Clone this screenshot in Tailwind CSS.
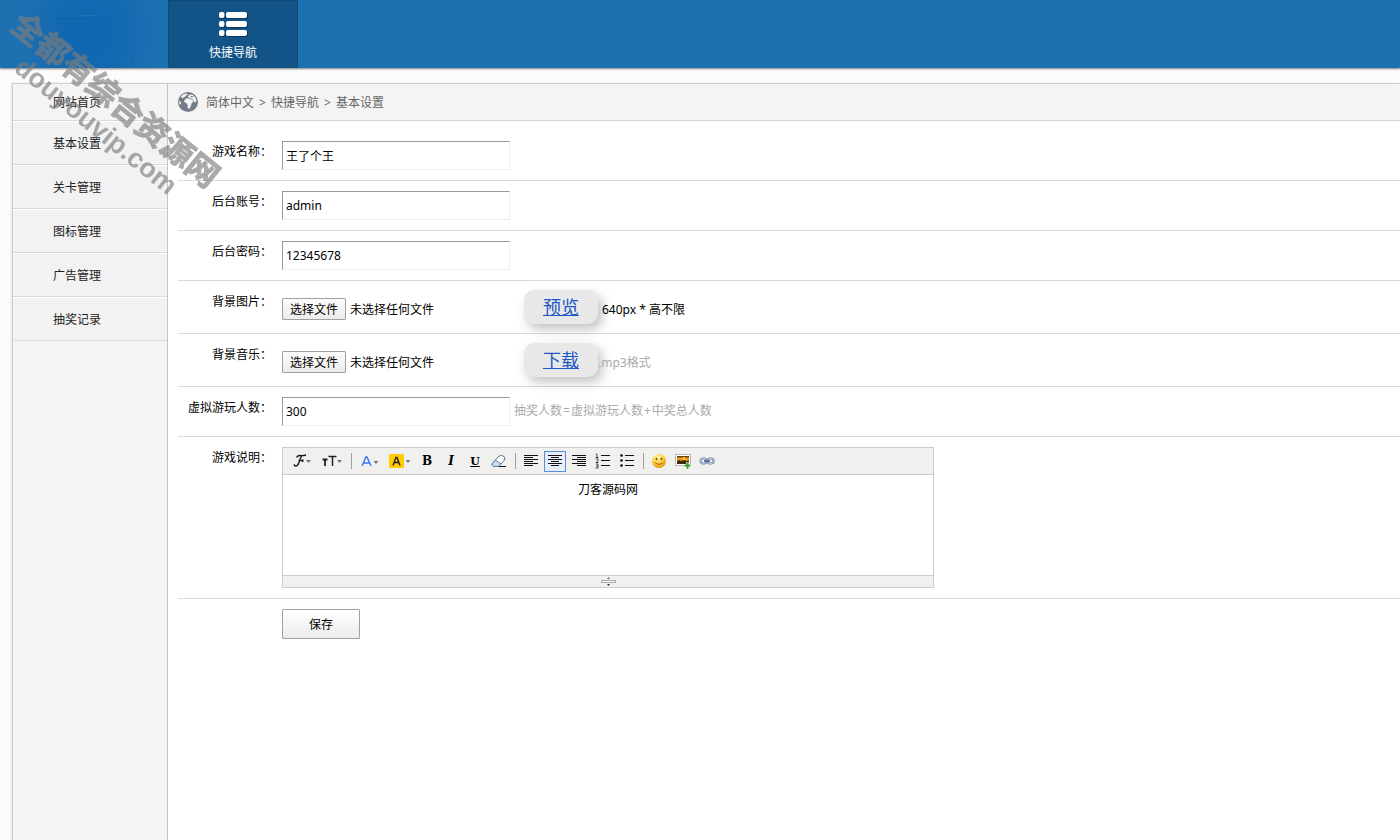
<!DOCTYPE html>
<html lang="zh-CN">
<head>
<meta charset="utf-8">
<title>基本设置</title>
<script src="https://cdn.jsdelivr.net/npm/@tailwindcss/browser@4"></script>
</head>
<body class="relative flex h-screen flex-col overflow-hidden bg-[#fcfcfc] font-['Noto_Sans','Noto_Sans_CJK_SC',sans-serif] text-xs text-black">

<header class="relative z-10 flex h-[68px] shrink-0 bg-[#1e71b1] shadow-[0_1px_2px_#00000080]">
  <div class="w-[168px] bg-[radial-gradient(ellipse_70px_80px_at_90px_34px,#0f67b2_0%,#1269b1_45%,transparent_100%)]">
    <svg class="h-[68px] w-[168px]" viewBox="0 0 168 68" fill="none"><path d="M56 18.500q20 1 43-1" stroke="#0d5a9c" stroke-opacity=".6"/><path d="M78 15.500h20" stroke="#2a7fc0" stroke-opacity=".5"/><path d="m131 59 2-2" stroke="#0d5a9c"/></svg>
  </div>
  <button type="button" class="flex w-[130px] flex-col items-center border border-b-0 border-[#0f4a78] bg-[#125488] pt-[11px] text-white">
    <svg class="h-6 w-7 drop-shadow-[1px_1px_0_#0a3558]" viewBox="0 0 28 24" fill="#fff"><rect x="0" y="0" width="5.500" height="6" rx="2"/><rect x="7" y="0" width="21" height="6" rx="2"/><rect x="0" y="9" width="5.500" height="6" rx="2"/><rect x="7" y="9" width="21" height="6" rx="2"/><rect x="0" y="18" width="5.500" height="6" rx="2"/><rect x="7" y="18" width="21" height="6" rx="2"/></svg>
    <span class="mt-2 leading-[18px]">快捷导航</span>
  </button>
</header>

<div class="mt-[15px] ml-3 flex min-h-0 grow border-t border-l border-[#cfcfcf] bg-white shadow-[-1px_0_2px_#0000001a]">
  <nav class="w-[155px] shrink-0 border-r border-[#c4c4c4] bg-[#f4f4f4] text-[#222]">
    <a href="#" class="flex h-[37px] items-center border-b border-[#dadada] pt-[2px] pl-10">网站首页</a>
    <a href="#" class="flex h-11 items-center border-t border-b border-t-white border-b-[#dadada] bg-[#f2f2f2] pt-[2px] pl-10">基本设置</a>
    <a href="#" class="flex h-11 items-center border-t border-b border-t-white border-b-[#dadada] bg-[#f2f2f2] pt-[2px] pl-10">关卡管理</a>
    <a href="#" class="flex h-11 items-center border-t border-b border-t-white border-b-[#dadada] bg-[#f2f2f2] pt-[2px] pl-10">图标管理</a>
    <a href="#" class="flex h-11 items-center border-t border-b border-t-white border-b-[#dadada] bg-[#f2f2f2] pt-[2px] pl-10">广告管理</a>
    <a href="#" class="flex h-11 items-center border-t border-b border-t-white border-b-[#dadada] bg-[#f2f2f2] pt-[2px] pl-10">抽奖记录</a>
  </nav>

  <main class="min-w-0 grow">
    <div class="flex h-[37px] items-center border-b border-[#d3d3d3] bg-[#f4f4f4] pl-[10px] leading-5 text-[#666]">
      <svg class="mr-2 h-5 w-5" viewBox="0 0 20 20"><circle cx="10" cy="10" r="10" fill="#757b88"/><path fill="#f4f4f4" d="M3 4.500 5 2.600 8 1.400l2 .8-1.600 1-1 1.200-1.500.5L5 6.200 3.800 6zM7 7.600l1.800-1.400 2.400.3 1.200 1 1.600-.2.800 1.200.2 1.600-1.200 1-.6 2-1.200 2.800-1.400 1.200-1-1.800v-2.600L8.400 11 6.800 10.400 6 9zM9.800 4.200l2.200-1.800 2.800.4 2.800 3 .8 2.700-.9 2-1.500-.6L15 7.600l-1.400-1-2-.4zM1.200 9l1.200.6.800 2-.8 1.200-1.200-1.600z"/><path fill="#757b88" d="m12 4.500 2-.7 1.500 1.200-1.500.5z"/></svg>
      <span class="pt-[2px]">简体中文</span><span class="w-[17px] pt-[2px] text-center">&gt;</span><span class="pt-[2px]">快捷导航</span><span class="w-[17px] pt-[2px] text-center">&gt;</span><span class="pt-[2px]">基本设置</span>
    </div>

    <form class="ml-[10px] pt-[10px]">
      <div class="flex border-b border-[#dadada] py-[10px]">
        <label for="f1" class="mr-[10px] w-[94px] text-right leading-[22px]">游戏名称：</label>
        <input id="f1" type="text" value="王了个王" class="h-[29px] w-[228px] border border-t-[#999] border-r-[#eee] border-b-[#eee] border-l-[#999] px-[3px] outline-none">
      </div>
      <div class="flex border-b border-[#dadada] py-[10px]">
        <label for="f2" class="mr-[10px] w-[94px] text-right leading-[22px]">后台账号：</label>
        <input id="f2" type="text" value="admin" class="h-[29px] w-[228px] border border-t-[#999] border-r-[#eee] border-b-[#eee] border-l-[#999] px-[3px] outline-none">
      </div>
      <div class="flex border-b border-[#dadada] py-[10px]">
        <label for="f3" class="mr-[10px] w-[94px] text-right leading-[22px]">后台密码：</label>
        <input id="f3" type="text" value="12345678" class="h-[29px] w-[228px] border border-t-[#999] border-r-[#eee] border-b-[#eee] border-l-[#999] px-[3px] outline-none">
      </div>
      <div class="flex border-b border-[#dadada] py-[9px]">
        <span class="mr-[10px] w-[94px] text-right leading-6">背景图片：</span>
        <div class="relative mt-2 mr-1 flex w-[238px] gap-1 leading-6">
          <input id="f4" type="file" class="sr-only" aria-label="背景图片">
          <label for="f4" class="flex h-[22px] w-16 items-center justify-center rounded-[1px] border border-[#a0a0a0] bg-linear-to-b from-[#fcfcfc] to-[#ececec] pt-[2px]">选择文件</label>
          <span class="h-[22px]">未选择任何文件</span>
        </div>
        <a href="#" class="mr-1 flex h-[34px] w-[74px] items-center justify-center rounded-[10px] bg-[#e8e8e8] text-lg text-[#2057c7] underline shadow-[4px_5px_12px_#00000040]">预览</a>
        <span class="mt-2 h-[22px] leading-6">640px * 高不限</span>
      </div>
      <div class="flex border-b border-[#dadada] py-[9px]">
        <span class="mr-[10px] w-[94px] text-right leading-6">背景音乐：</span>
        <div class="relative mt-2 mr-1 flex w-[238px] gap-1 leading-6">
          <input id="f5" type="file" class="sr-only" aria-label="背景音乐">
          <label for="f5" class="flex h-[22px] w-16 items-center justify-center rounded-[1px] border border-[#a0a0a0] bg-linear-to-b from-[#fcfcfc] to-[#ececec] pt-[2px]">选择文件</label>
          <span class="h-[22px]">未选择任何文件</span>
        </div>
        <a href="#" class="flex h-[34px] w-[74px] items-center justify-center rounded-[10px] bg-[#e8e8e8] text-lg text-[#2057c7] underline shadow-[4px_5px_12px_#00000040]">下载</a>
        <span class="mt-2 h-[22px] leading-6 text-[#aaa]">.mp3格式</span>
      </div>
      <div class="flex border-b border-[#dadada] py-[10px]">
        <label for="f6" class="mr-[10px] w-[94px] text-right leading-[22px]">虚拟游玩人数：</label>
        <input id="f6" type="text" value="300" class="mr-1 h-[29px] w-[228px] border border-t-[#999] border-r-[#eee] border-b-[#eee] border-l-[#999] px-[3px] outline-none">
        <span class="leading-7 text-[#aaa]">抽奖人数<span class="px-px">=</span>虚拟游玩人数<span class="px-px">+</span>中奖总人数</span>
      </div>
      <div class="flex border-b border-[#dadada] py-[10px]">
        <span class="mr-[10px] w-[94px] text-right leading-[22px]">游戏说明：</span>
        <div class="w-[652px] border border-[#ccc]">
          <div role="toolbar" class="flex h-[27px] items-center gap-[2px] border-b border-[#ccc] bg-[#f0f0ee] pl-[5px]">
            <button type="button" aria-label="字体" class="flex h-[21px] w-7 items-center justify-center"><svg class="h-4 w-5" viewBox="0 0 20 16"><path d="M4.500 4.500Q5.500 2.500 8 2.500q3 .5 6-.5M9.500 3Q8 6 7 9.500 5.800 13 3.500 13 1.800 12.800 2.500 11.300M6.500 7.500h5M11 6.300 10.500 9" fill="none" stroke="#1c1c1c" stroke-width="1.400"/><path d="M14 7h5l-2.500 3z" fill="#777"/></svg></button>
            <button type="button" aria-label="文字大小" class="flex h-[21px] w-7 items-center justify-center"><svg class="h-4 w-5" viewBox="0 0 20 16" fill="none" stroke="#222"><path d="M.500 6.500h5M3 6.500V13" stroke-width="1.800"/><path d="M6.500 3.500h8M10.500 3v10" stroke-width="1.500"/><path d="M15 7h5l-2.500 3z" fill="#777" stroke="none"/></svg></button>
            <span class="flex h-4 w-[6px] justify-center"><i class="w-px bg-[#a0a0a0]"></i></span>
            <button type="button" aria-label="文字颜色" class="flex h-[21px] w-7 items-center justify-center"><svg class="h-4 w-[18px]" viewBox="0 0 18 16"><path d="m1 13 4-9h1l4 9M2.500 10h6" fill="none" stroke="#3476f5" stroke-width="1.400"/><path d="M12.500 8h5L15 11z" fill="#777"/></svg></button>
            <button type="button" aria-label="文字背景" class="flex h-[21px] w-7 items-center justify-center"><svg class="h-4 w-[22px]" viewBox="0 0 22 16"><rect y="1" width="15" height="14" rx="1.500" fill="#fc0"/><path d="m4 12.500 3-8h1l3 8M5 9.500h5" fill="none" stroke="#222" stroke-width="1.400"/><path d="M16.500 7h5L19 10z" fill="#777"/></svg></button>
            <button type="button" aria-label="粗体" class="h-[21px] w-[22px] font-['DejaVu_Serif',serif] text-xs leading-[21px] font-bold">B</button>
            <button type="button" aria-label="斜体" class="h-[21px] w-[22px] font-['DejaVu_Serif',serif] text-xs leading-[21px] font-bold italic">I</button>
            <button type="button" aria-label="下划线" class="h-[21px] w-[22px] font-['DejaVu_Serif',serif] text-[11px] leading-[19px] font-bold underline underline-offset-1">U</button>
            <button type="button" aria-label="删除格式" class="flex h-[21px] w-[22px] items-center justify-center"><svg class="h-4 w-4" viewBox="0 0 16 16"><path d="M7 13.500h8" stroke="#111"/><path d="M1 11 7 4Q8.500 2.500 10.500 2.500L13 3.500Q14.500 5 13.500 7L8.500 12.500Q7.500 13.500 6 13.500H3Q1 13 1 11z" fill="#fff" stroke="#5b7396"/><path d="M4.500 7.200 10 10.800 8 13Q7 13.500 6 13.500H3Q1 13 1 11z" fill="#c9daf3" stroke="#5b7396" stroke-width=".8"/></svg></button>
            <span class="flex h-4 w-[6px] justify-center"><i class="w-px bg-[#a0a0a0]"></i></span>
            <button type="button" aria-label="左对齐" class="flex h-[21px] w-[22px] items-center justify-center"><svg class="h-4 w-4" viewBox="0 0 16 16" shape-rendering="crispEdges"><path d="M1 2.500h14M1 4.500h9M1 6.500h14M1 8.500h9M1 10.500h14M1 12.500h9" stroke="#111"/></svg></button>
            <button type="button" aria-label="居中" aria-pressed="true" class="flex h-[21px] w-[22px] items-center justify-center border border-[#5690d2] bg-[#e9effa]"><svg class="h-4 w-4 shrink-0" viewBox="0 0 16 16" shape-rendering="crispEdges"><path d="M1 2.500h14M4 4.500h8M1 6.500h14M4 8.500h8M1 10.500h14M4 12.500h8" stroke="#111"/></svg></button>
            <button type="button" aria-label="右对齐" class="flex h-[21px] w-[22px] items-center justify-center"><svg class="h-4 w-4" viewBox="0 0 16 16" shape-rendering="crispEdges"><path d="M1 2.500h14M6 4.500h9M1 6.500h14M6 8.500h9M1 10.500h14M6 12.500h9" stroke="#111"/></svg></button>
            <button type="button" aria-label="编号" class="flex h-[21px] w-[22px] items-center justify-center"><svg class="h-4 w-4" viewBox="0 0 16 16"><path d="M6 2.500h9M6 7.500h9M6 12.500h9" stroke="#111"/><path d="M1 1h1v3M.500 4.500h3M1 6h2v1.500L1 9.500h2.500M1 11h2v4H.500M1 13h2" fill="none" stroke="#333" stroke-width=".9"/></svg></button>
            <button type="button" aria-label="项目符号" class="flex h-[21px] w-[22px] items-center justify-center"><svg class="h-4 w-4" viewBox="0 0 16 16"><path d="M6 2.500h9M6 7.500h9M6 12.500h9" stroke="#111"/><circle cx="2.500" cy="2.500" r="1.300"/><circle cx="2.500" cy="7.500" r="1.300"/><circle cx="2.500" cy="12.500" r="1.300"/></svg></button>
            <span class="flex h-4 w-[6px] justify-center"><i class="w-px bg-[#a0a0a0]"></i></span>
            <button type="button" aria-label="插入表情" class="flex h-[21px] w-[22px] items-center justify-center"><svg class="h-4 w-4" viewBox="0 0 16 16"><defs><radialGradient id="sm" cx=".4" cy=".25" r=".8"><stop stop-color="#fff7b0"/><stop offset=".55" stop-color="#fdcf3a"/><stop offset="1" stop-color="#e08a10"/></radialGradient></defs><circle cx="8" cy="8" r="7" fill="url(#sm)"/><ellipse cx="5.500" cy="6" rx=".9" ry="1.300" fill="#7a4a08"/><ellipse cx="10.500" cy="6" rx=".9" ry="1.300" fill="#7a4a08"/><path d="M3.800 9.200Q8 13.500 12.200 9.200" fill="none" stroke="#a8660c" stroke-width="1"/></svg></button>
            <button type="button" aria-label="图片" class="flex h-[21px] w-[22px] items-center justify-center"><svg class="h-4 w-4" viewBox="0 0 16 16"><rect x=".5" y="1.500" width="15" height="11" fill="#fff" stroke="#b8b8b8"/><path d="M2 3h12v8H2z" fill="#e79b17"/><path d="M2 3h12v1.500H2z" fill="#6b4206"/><path d="M2 11V8l2-1 2 1 3-1 2 1 3-.5V11z" fill="#3d2808"/><circle cx="9" cy="5.500" r="1.300" fill="#ffd94a"/><path d="M12.500 9.200v6.600M9.200 12.500h6.600" stroke="#fff" stroke-width="3"/><path d="M12.500 9.500v6.200M9.500 12.500h6" stroke="#3a9a2d" stroke-width="2"/></svg></button>
            <button type="button" aria-label="超级链接" class="flex h-[21px] w-[22px] items-center justify-center"><svg class="h-4 w-4" viewBox="0 0 16 16" fill="none"><g stroke="#7083a3" stroke-width="2.200"><rect x="1.500" y="5.500" width="6" height="5" rx="2.500"/><rect x="8.500" y="5.500" width="6" height="5" rx="2.500"/></g><g stroke="#c9d5ea" stroke-width=".8"><rect x="1.500" y="5.500" width="6" height="5" rx="2.500"/><rect x="8.500" y="5.500" width="6" height="5" rx="2.500"/></g><path d="M5 8h6" stroke="#3d5278" stroke-width="1.400"/></svg></button>
          </div>
          <div contenteditable="true" role="textbox" aria-label="游戏说明" class="h-[100px] bg-white py-[5px] text-center leading-5 outline-none">刀客源码网</div>
          <div class="flex h-3 items-center justify-center border-t border-[#ccc] bg-[#f0f0ee]">
            <svg class="h-[11px] w-[15px]" viewBox="0 0 15 11"><path d="M6 3h3L7.500 1z" fill="#777"/><path d="M6 8h3l-1.500 2z" fill="#333"/><rect x=".5" y="4.500" width="14" height="2" fill="#fff" stroke="#aaa"/></svg>
          </div>
        </div>
      </div>
      <div class="py-[10px] pl-[104px]">
        <button type="submit" class="h-[30px] w-[78px] rounded-[1px] border border-[#a0a0a0] bg-linear-to-b from-white to-[#ececec] pt-[2px]">保存</button>
      </div>
    </form>
  </main>
</div>

<!-- Site watermark laid over the whole page -->
<div aria-hidden="true" class="pointer-events-none absolute top-0 left-0 z-20 whitespace-nowrap text-[#7d7d7d] opacity-65">
  <span class="absolute top-[98px] left-[117px] -translate-x-1/2 -translate-y-1/2 rotate-[39deg] font-['Noto_Sans_CJK_SC',sans-serif] text-[32px] leading-8 font-bold [-webkit-text-stroke:1px_#7d7d7d]">全都有综合资源网</span>
  <span class="absolute top-[126px] left-[96px] -translate-x-1/2 -translate-y-1/2 rotate-[39deg] font-['Liberation_Sans',sans-serif] text-[27px] leading-8 font-bold">douyouvip.com</span>
</div>
</body>
</html>
